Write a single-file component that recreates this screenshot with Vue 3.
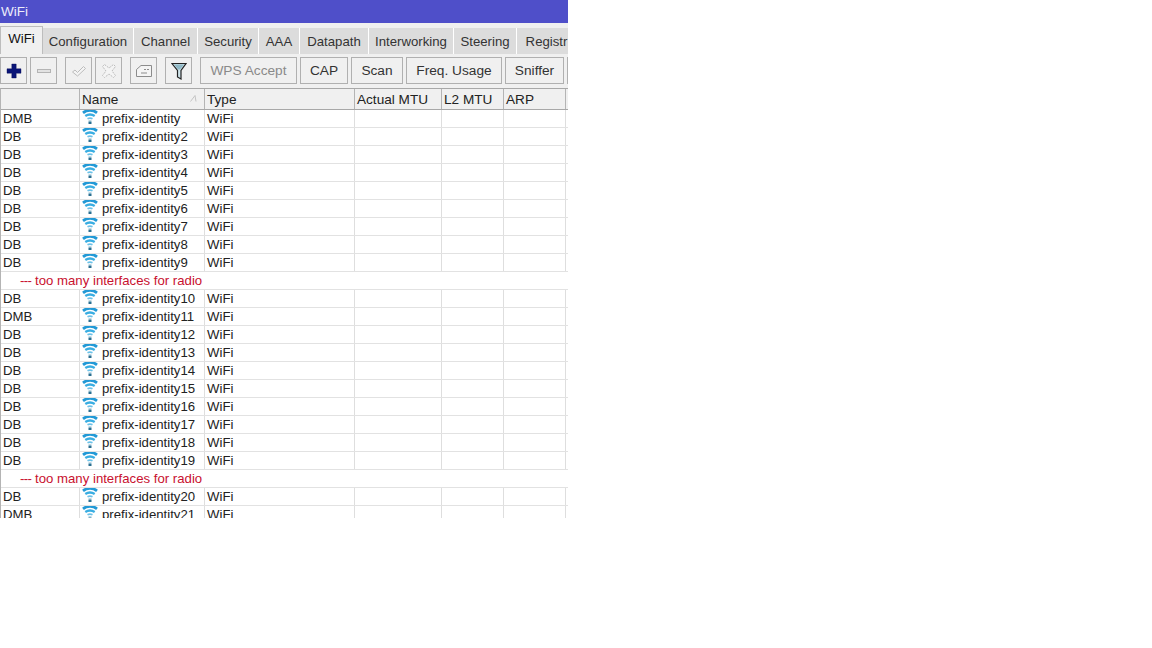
<script setup>
const tabs = [
  { label: 'WiFi', w: 43 }, { label: 'Configuration', w: 91 }, { label: 'Channel', w: 64 },
  { label: 'Security', w: 61 }, { label: 'AAA', w: 41 }, { label: 'Datapath', w: 69 },
  { label: 'Interworking', w: 85 }, { label: 'Steering', w: 63 }, { label: 'Registr', w: 60 }
]
const textButtons = [
  { label: 'WPS Accept', w: 97, off: true }, { label: 'CAP', w: 48 }, { label: 'Scan', w: 52 },
  { label: 'Freq. Usage', w: 96 }, { label: 'Sniffer', w: 59 }, { label: '', w: 20 }
]
const heads = ['', 'Name', 'Type', 'Actual MTU', 'L2 MTU', 'ARP']
const rows = []
const add = (from, to, dmb) => {
  for (let i = from; i <= to; i++) rows.push({ flag: dmb.includes(i) ? 'DMB' : 'DB', name: 'prefix-identity' + (i === 1 ? '' : i) })
}
add(1, 9, [1])
rows.push({ comment: 'too many interfaces for radio' })
add(10, 19, [11])
rows.push({ comment: 'too many interfaces for radio' })
add(20, 21, [21])
</script>

<template>
  <div class="win">
    <div class="title">WiFi</div>
    <div class="tabs">
      <div v-for="(t, i) in tabs" :key="t.label" class="tab" :class="{ active: i === 0 }" :style="{ width: t.w + 'px' }">{{ t.label }}</div>
    </div>
    <div class="toolbar">
      <button class="ib">
        <svg width="16" height="16" viewBox="0 0 16 16"><path d="M5.800 1h4.400v4.800H15v4.400h-4.800V15H5.800v-4.800H1V5.800h4.800z" fill="#0a1478" stroke="#050a50" stroke-width=".4"/></svg>
      </button>
      <button class="ib">
        <svg width="16" height="16" viewBox="0 0 16 16"><rect x="1.500" y="6.500" width="13" height="3" fill="#e2e2e2" stroke="#b4b4b4"/></svg>
      </button>
      <button class="ib g1">
        <svg width="16" height="16" viewBox="0 0 16 16"><path d="M1.500 9l2.500-2 2.500 2.500L12.500 3.500l2 2-8 7.500z" fill="#f4f4f4" stroke="#bcbcbc"/></svg>
      </button>
      <button class="ib">
        <svg width="16" height="16" viewBox="0 0 16 16"><path d="M3.500 1.500L8 5l4.500-3.500 2 2L11 8l3.500 4.500-2 2L8 11l-4.500 3.500-2-2L5 8 1.500 3.500z" fill="#f4f4f4" stroke="#bcbcbc" stroke-dasharray="2 1"/></svg>
      </button>
      <button class="ib g2">
        <svg width="18" height="16" viewBox="0 0 18 16"><path d="M1.500 6.500L6 2.500h10.500v11h-15z" fill="#f4f4f4" stroke="#8c8c8c"/><path d="M9 6.500h2M12 6.500h2M6 10h6" stroke="#8c8c8c"/></svg>
      </button>
      <button class="ib g3">
        <svg width="16" height="18" viewBox="0 0 16 18"><path d="M1 1.500h14L10 8.500v8.500L6.500 15V8.500z" fill="#cfe4ea" stroke="#222" stroke-width="1.200"/><path d="M3 2.500h10l-4 5H7z" fill="#8fb8c6"/></svg>
      </button>
      <button
        v-for="(b, i) in textButtons"
        :key="i"
        class="tb"
        :class="{ off: b.off, first: i === 0 }"
        :style="{ width: b.w + 'px' }"
      >{{ b.label }}</button>
    </div>
    <div class="table">
      <div class="row head">
        <div v-for="(h, i) in heads" :key="i" class="cell">
          {{ h }}
          <svg v-if="h === 'Name'" class="sort" width="7" height="7" viewBox="0 0 7 7"><path d="M.5 6.500L5 .5l1 6" fill="none" stroke="#c4c4c4"/></svg>
        </div>
      </div>
      <template v-for="(r, i) in rows" :key="i">
        <div v-if="r.comment" class="comment"><span class="dash">---</span> {{ r.comment }}</div>
        <div v-else class="row">
          <div class="cell">{{ r.flag }}</div>
          <div class="cell name">
            <svg class="wifi" width="16" height="16" viewBox="0 0 16 16">
              <path d="M1 3.800C5 .6 11 .6 15 3.800" fill="none" stroke="#2299d6" stroke-width="2.800"/>
              <path d="M3.300 7C6 5.200 10 5.200 12.700 7" fill="none" stroke="#38ade2" stroke-width="2.400"/>
              <path d="M5.500 9.700C7.200 8.800 8.800 8.800 10.500 9.700" fill="none" stroke="#6cc2e8" stroke-width="1.800"/>
              <rect x="6.500" y="11.500" width="3" height="1.500" fill="#7fb0c6"/>
              <rect x="6.500" y="13" width="3" height="2" fill="#2b6f90"/>
            </svg>
            {{ r.name }}
          </div>
          <div class="cell">WiFi</div>
          <div class="cell"></div>
          <div class="cell"></div>
          <div class="cell"></div>
        </div>
      </template>
    </div>
  </div>
</template>

<style scoped>
.win {
  width: 568px;
  height: 518px;
  overflow: hidden;
  background: #f0f0f0;
  font-family: "Liberation Sans", Arial, sans-serif;
  font-size: 13.2px;
  color: #222;
}
.title {
  height: 23px;
  line-height: 24px;
  padding-left: 1px;
  background: #4f4fc9;
  color: #ececfa;
  font-size: 13.5px;
}
.tabs {
  display: flex;
  height: 30px;
  padding-top: 2px;
  box-sizing: border-box;
  margin-top: 1px;
  overflow: hidden;
}
.tab {
  flex: none;
  box-sizing: border-box;
  height: 28px;
  margin-top: 2px;
  border-right: 1px solid #fff;
  background: #dcdcdc;
  text-align: center;
  line-height: 27px;
  white-space: nowrap;
  overflow: hidden;
  color: #333;
}
.tab.active {
  height: 30px;
  margin-top: 0;
  background: #f0f0f0;
  border-left: 1px solid #bdbdbd;
  border-top: 1px solid #bdbdbd;
  border-right: 1px solid #bdbdbd;
  line-height: 23px;
  color: #111;
}
.toolbar {
  display: flex;
  gap: 3px;
  height: 34px;
  padding: 3px 0 0 0;
  box-sizing: border-box;
  overflow: hidden;
}
button {
  flex: none;
  height: 27px;
  padding: 0;
  margin: 0;
  border: 1px solid #b0b0b0;
  border-radius: 0;
  background: #f0f0f0;
  font: inherit;
  font-size: 13.7px;
  color: #333;
  display: flex;
  align-items: center;
  justify-content: center;
}
.ib { width: 27px; }
.g1, .g2, .g3 { margin-left: 5px; }
.tb.first { margin-left: 5px; }
.tb.off { color: #8a8a8a; }
.table {
  width: 568px;
  box-sizing: border-box;
  background: #fff;
  border-top: 1px solid #a8a8a8;
  border-left: 1px solid #b4b4b4;
}
.row {
  display: grid;
  grid-template-columns: 79px 125px 150px 87px 62px 62px;
  height: 18px;
  box-sizing: border-box;
  border-bottom: 1px solid #e2e2e2;
  line-height: 17px;
}
.cell {
  box-sizing: border-box;
  padding-left: 2px;
  border-right: 1px solid #dedede;
  white-space: nowrap;
  overflow: hidden;
}
.head {
  height: 21px;
  background: #f0f0f0;
  border-bottom: 1px solid #a8a8a8;
  line-height: 21px;
  font-size: 13.6px;
}
.head .cell {
  position: relative;
  border-right-color: #b4b4b4;
}
.sort { position: absolute; right: 7px; top: 6px; }
.name {
  display: flex;
  align-items: center;
  gap: 4px;
}
.wifi { flex: none; margin-top: -3px; }
.comment {
  height: 18px;
  box-sizing: border-box;
  padding-left: 19px;
  line-height: 17px;
  color: #c8102e;
  border-bottom: 1px solid #e2e2e2;
}
.dash { letter-spacing: -0.6px; }
</style>
